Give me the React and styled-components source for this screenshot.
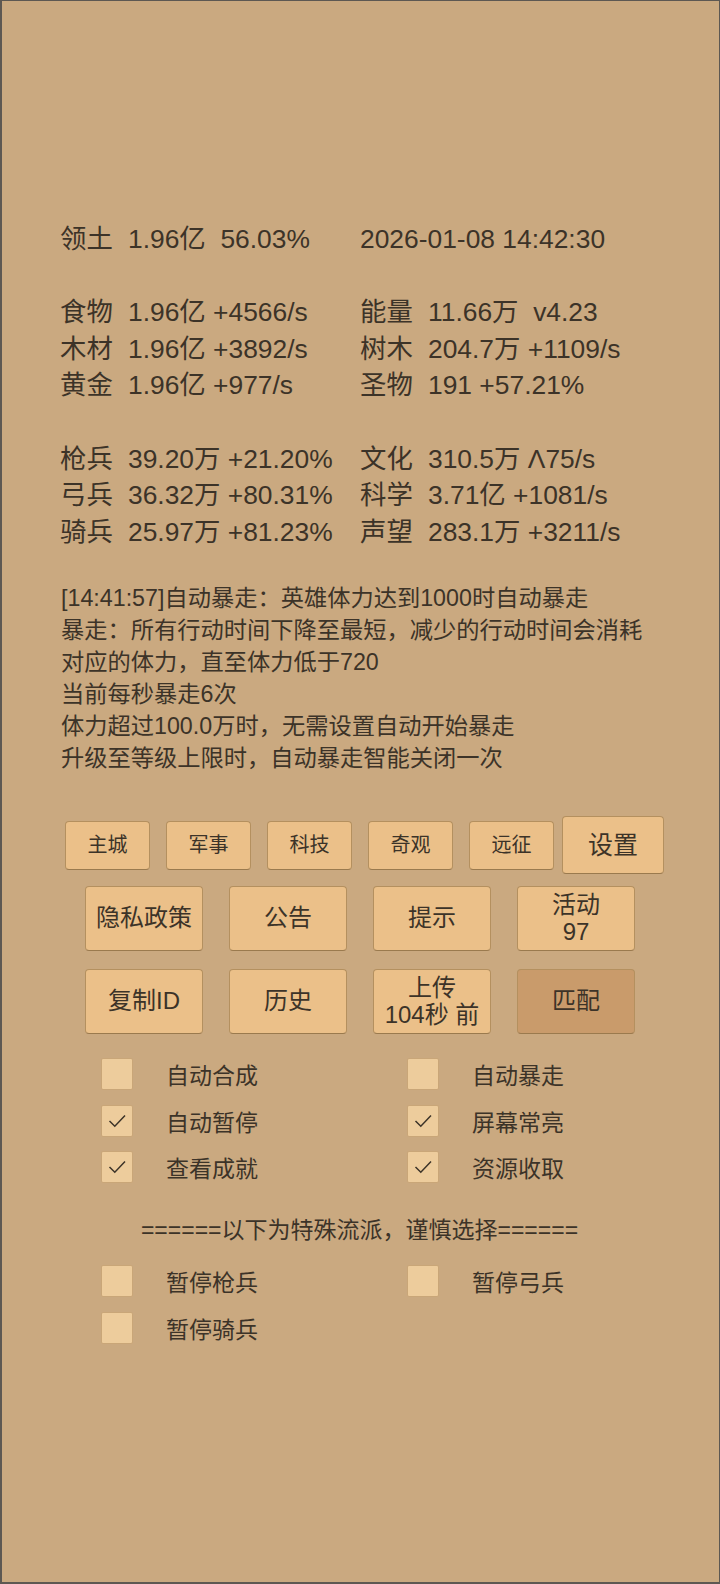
import React from "react";
import styled, { createGlobalStyle } from "styled-components";

const GlobalStyle = createGlobalStyle`
  html, body {
    margin: 0;
    padding: 0;
    background: #caa980;
  }
  * {
    box-sizing: border-box;
  }
`;

const Page = styled.div`
  width: 720px;
  height: 1584px;
  background: #caa980;
  border: 1px solid #5d5852;
  border-width: 1px 1px 2px 2px;
  font-family: "Liberation Sans", "Noto Sans CJK SC", sans-serif;
  color: #3c3328;
  padding-top: 220px;
`;

const Stats = styled.div`
  display: grid;
  grid-template-columns: 300px 300px;
  padding-left: 58px;
  font-size: 26.4px;
  line-height: 36.6px;
`;

const Cell = styled.div`
  display: flex;
  white-space: pre;
  height: 36.6px;
`;

const Label = styled.span`
  width: 68px;
  flex: none;
`;

const Log = styled.div`
  margin-top: 32px;
  padding-left: 59px;
  font-size: 23.25px;
  line-height: 32px;
`;

const BtnRow = styled.div`
  display: flex;
  align-items: center;
  gap: ${(p) => p.$gap}px;
  padding-left: ${(p) => p.$left}px;
  margin-top: ${(p) => p.$top}px;
`;

const Btn = styled.div`
  width: ${(p) => p.$w}px;
  height: ${(p) => p.$h}px;
  margin-left: ${(p) => p.$ml || 0}px;
  display: flex;
  flex-direction: column;
  align-items: center;
  justify-content: center;
  background: ${(p) => (p.$dark ? "#c99b6b" : "#ebc089")};
  border: 1px solid #b4905f;
  border-bottom-color: #9a7a4e;
  border-radius: 4px;
  font-size: ${(p) => p.$fs}px;
  line-height: 1.12;
  color: #3c3328;
  text-align: center;
`;

const Checks = styled.div`
  display: grid;
  grid-template-columns: 306px 200px;
  row-gap: 14.5px;
  padding-left: 99px;
  margin-top: ${(p) => p.$top}px;
`;

const CheckItem = styled.div`
  display: flex;
  align-items: center;
  height: 32px;
  font-size: 23px;
`;

const Box = styled.div`
  width: 32px;
  height: 32px;
  flex: none;
  background: #edcc9c;
  border: 1px solid #c9a678;
  border-radius: 2px;
  margin-right: 33px;
  display: flex;
  align-items: center;
  justify-content: center;
`;

const Separator = styled.div`
  margin-top: 32px;
  text-align: center;
  font-size: 23px;
  line-height: 30px;
  padding-right: 2px;
`;

const stats = [
  [["领土", "1.96亿  56.03%"], [null, "2026-01-08 14:42:30"]],
  null,
  [["食物", "1.96亿 +4566/s"], ["能量", "11.66万  v4.23"]],
  [["木材", "1.96亿 +3892/s"], ["树木", "204.7万 +1109/s"]],
  [["黄金", "1.96亿 +977/s"], ["圣物", "191 +57.21%"]],
  null,
  [["枪兵", "39.20万 +21.20%"], ["文化", "310.5万 Λ75/s"]],
  [["弓兵", "36.32万 +80.31%"], ["科学", "3.71亿 +1081/s"]],
  [["骑兵", "25.97万 +81.23%"], ["声望", "283.1万 +3211/s"]],
];

const logLines = [
  "[14:41:57]自动暴走：英雄体力达到1000时自动暴走",
  "暴走：所有行动时间下降至最短，减少的行动时间会消耗",
  "对应的体力，直至体力低于720",
  "当前每秒暴走6次",
  "体力超过100.0万时，无需设置自动开始暴走",
  "升级至等级上限时，自动暴走智能关闭一次",
];

const Check = () => (
  <svg width="22" height="22" viewBox="0 0 22 22">
    <path d="M3.5 11 L8.8 16.2 L19 5.5" fill="none" stroke="#3c3328" strokeWidth="1.5" />
  </svg>
);

const CheckRow = ({ label, checked }) => (
  <CheckItem>
    <Box>{checked && <Check />}</Box>
    {label}
  </CheckItem>
);

const StatCell = ({ item }) => (
  <Cell>
    {item[0] && <Label>{item[0]}</Label>}
    <span>{item[1]}</span>
  </Cell>
);

export default function App() {
  return (
    <>
      <GlobalStyle />
      <Page>
        <Stats>
          {stats.map((row, i) =>
            row ? (
              <React.Fragment key={i}>
                <StatCell item={row[0]} />
                <StatCell item={row[1]} />
              </React.Fragment>
            ) : (
              <React.Fragment key={i}>
                <Cell />
                <Cell />
              </React.Fragment>
            )
          )}
        </Stats>

        <Log>
          {logLines.map((l) => (
            <div key={l}>{l}</div>
          ))}
        </Log>

        <BtnRow $gap={16} $left={63} $top={42}>
          {["主城", "军事", "科技", "奇观", "远征"].map((t) => (
            <Btn key={t} $w={85} $h={49} $fs={20}>
              {t}
            </Btn>
          ))}
          <Btn $w={102} $h={58} $fs={25} $ml={-8}>
            设置
          </Btn>
        </BtnRow>

        <BtnRow $gap={26} $left={83} $top={12}>
          <Btn $w={118} $h={65} $fs={24}>隐私政策</Btn>
          <Btn $w={118} $h={65} $fs={24}>公告</Btn>
          <Btn $w={118} $h={65} $fs={24}>提示</Btn>
          <Btn $w={118} $h={65} $fs={24}>
            <span>活动</span>
            <span>97</span>
          </Btn>
        </BtnRow>

        <BtnRow $gap={26} $left={83} $top={18}>
          <Btn $w={118} $h={65} $fs={24}>复制ID</Btn>
          <Btn $w={118} $h={65} $fs={24}>历史</Btn>
          <Btn $w={118} $h={65} $fs={24}>
            <span>上传</span>
            <span>104秒 前</span>
          </Btn>
          <Btn $w={118} $h={65} $fs={24} $dark>
            匹配
          </Btn>
        </BtnRow>

        <Checks $top={24}>
          <CheckRow label="自动合成" />
          <CheckRow label="自动暴走" />
          <CheckRow label="自动暂停" checked />
          <CheckRow label="屏幕常亮" checked />
          <CheckRow label="查看成就" checked />
          <CheckRow label="资源收取" checked />
        </Checks>

        <Separator>======以下为特殊流派，谨慎选择======</Separator>

        <Checks $top={20}>
          <CheckRow label="暂停枪兵" />
          <CheckRow label="暂停弓兵" />
          <CheckRow label="暂停骑兵" />
        </Checks>
      </Page>
    </>
  );
}
